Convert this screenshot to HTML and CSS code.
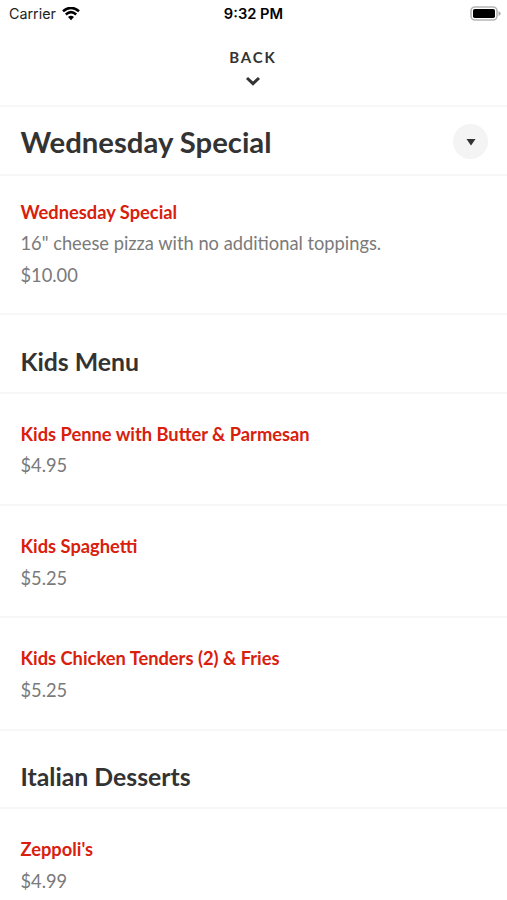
FILE: index.html
```html
<!DOCTYPE html>
<html lang="en">
<head>
<meta charset="utf-8">
<title>Menu</title>
<link rel="stylesheet" href="styles.css">
</head>
<body>
<div class="status">
  <div class="carrier"><span>Carrier</span>
    <svg width="18" height="14" viewBox="0 0 18 14"><path d="M1 4.3Q9-2.5 17 4.3M3.8 7.4Q9 3 14.2 7.4" fill="none" stroke="#000" stroke-width="2.6"/><path d="M6 10Q9 7.6 12 10L9 13.2Z"/></svg>
  </div>
  <div class="time">9:32 PM</div>
  <svg class="battery" width="31" height="15" viewBox="0 0 31 15"><rect x="1" y="1" width="26" height="13" rx="4" fill="none" stroke="#b5b5b5" stroke-width="1.6"/><rect x="3" y="3" width="22" height="9" rx="1.8"/><path d="M28.5 5Q30.7 6 30.7 7.5T28.5 10Z" fill="#aaa"/></svg>
</div>
<button class="back"><span>BACK</span>
  <svg width="16" height="10" viewBox="0 0 16 10"><path d="M2 2L8 7.6L14 2" fill="none" stroke="#333" stroke-width="3"/></svg>
</button>
<header class="title"><h1>Wednesday Special</h1>
  <button class="toggle"><svg width="10" height="8" viewBox="0 0 10 8"><path d="M.5 1H9.5L5 7.5Z" fill="#333"/></svg></button>
</header>
<main>
  <article class="item first"><h3>Wednesday Special</h3><p>16" cheese pizza with no additional toppings.</p><p>$10.00</p></article>
  <h2>Kids Menu</h2>
  <article class="item"><h3>Kids Penne with Butter &amp; Parmesan</h3><p>$4.95</p></article>
  <article class="item"><h3>Kids Spaghetti</h3><p>$5.25</p></article>
  <article class="item"><h3>Kids Chicken Tenders (2) &amp; Fries</h3><p>$5.25</p></article>
  <h2>Italian Desserts</h2>
  <article class="item"><h3>Zeppoli's</h3><p>$4.99</p></article>
</main>
</body>
</html>
```
FILE: styles.css
```css
* { box-sizing: border-box; }
body { margin: 0; height: 900px; overflow: hidden; background: #fff; color: #333; font-family: Lato, sans-serif; }
h1, h2, h3, p { margin: 0; }
button { border: 0; padding: 0; font: inherit; color: inherit; }
svg { display: block; }
.status { display: grid; grid-template-columns: 1fr auto 1fr; align-items: center; height: 28px; padding: 0 6px 0 9px; font: 14.3px/28px Inter, sans-serif; color: #222; }
.carrier { display: flex; align-items: center; gap: 6px; }
.carrier svg { margin-bottom: 1px; }
.time { margin-right: 3px; font-size: 14.7px; font-weight: 600; color: #000; }
.battery { justify-self: end; margin-bottom: 1px; }
.back { display: flex; flex-direction: column; align-items: center; gap: 9px; width: 100%; height: 79px; padding: 19px 1px 0 0; background: #fff; border-bottom: 2px solid #f7f7f7; font-size: 15px; line-height: 20px; font-weight: 700; letter-spacing: 1.9px; }
.title { display: flex; align-items: center; justify-content: space-between; height: 69px; padding: 2px 19px 0 20.5px; border-bottom: 2px solid #f7f7f7; }
h1 { font-size: 29.3px; line-height: 36px; font-weight: 700; }
.toggle { display: flex; align-items: center; justify-content: center; width: 35px; height: 35px; border-radius: 50%; background: #f4f4f4; }
.item { height: 112.4px; padding: 25px 20.5px 0; border-bottom: 2px solid #f7f7f7; font-size: 18.3px; line-height: 31.7px; }
.first { height: 139px; padding-top: 20.5px; }
h3 { font-size: 18.3px; font-weight: 700; color: #d8200d; }
p { color: #7a7a7a; }
h2 { height: 78.5px; padding: 28.5px 20.5px 0; border-bottom: 2px solid #f7f7f7; font-size: 24.8px; line-height: 36px; font-weight: 700; }
```
